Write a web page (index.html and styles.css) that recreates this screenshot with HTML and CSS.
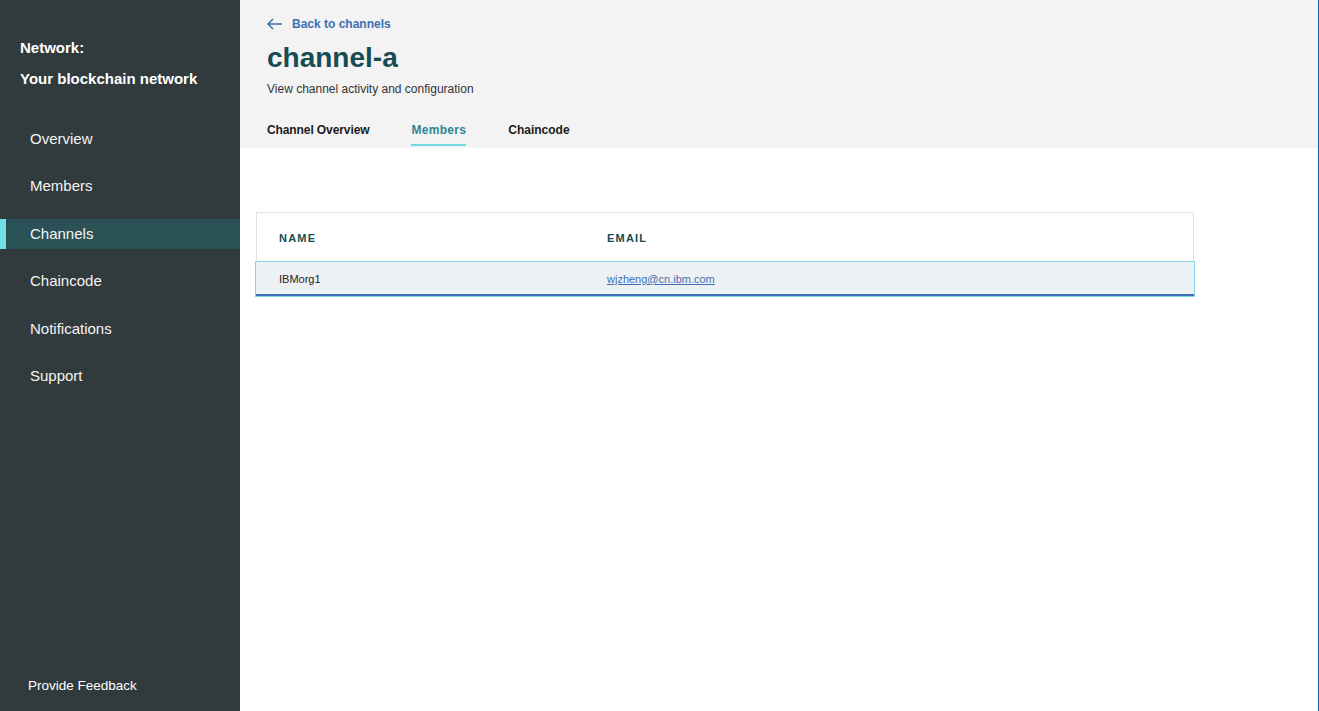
FILE: index.html
```html
<!DOCTYPE html>
<html>
<head>
<meta charset="utf-8">
<link rel="stylesheet" href="styles.css">
</head>
<body>
<div class="app">
  <aside class="sidebar">
    <div class="net">
      <div class="net-line">Network:</div>
      <div class="net-line net-name">Your blockchain network</div>
    </div>
    <nav class="nav">
      <a class="nav-item">Overview</a>
      <a class="nav-item">Members</a>
      <a class="nav-item active">Channels</a>
      <a class="nav-item">Chaincode</a>
      <a class="nav-item">Notifications</a>
      <a class="nav-item">Support</a>
    </nav>
    <div class="feedback">Provide Feedback</div>
  </aside>
  <main class="main">
    <header class="head">
      <a class="back">
        <svg class="back-icon" width="16" height="12" viewBox="0 0 16 12"><path d="M6 1 L1 6 L6 11 M1 6 H15" fill="none" stroke="#3d70b2" stroke-width="1.5"/></svg>
        <span>Back to channels</span>
      </a>
      <h1 class="title">channel-a</h1>
      <p class="desc">View channel activity and configuration</p>
      <div class="tabs">
        <span class="tab tab-first">Channel Overview</span>
        <span class="tab selected">Members</span>
        <span class="tab">Chaincode</span>
      </div>
    </header>
    <section class="content">
      <div class="table">
        <div class="row row-head">
          <div class="cell">NAME</div>
          <div class="cell">EMAIL</div>
        </div>
        <div class="row row-data">
          <div class="cell">IBMorg1</div>
          <div class="cell"><a class="mail">wjzheng@cn.ibm.com</a></div>
        </div>
      </div>
    </section>
  </main>
</div>
</body>
</html>
```

FILE: styles.css
```css
* { box-sizing: border-box; }
html, body { margin: 0; padding: 0; }
body {
  font-family: "Liberation Sans", Arial, sans-serif;
  background: #fff;
  color: #222;
}
.app {
  display: flex;
  height: 711px;
}
.sidebar {
  width: 240px;
  flex: none;
  background: #313a3d;
  color: #fff;
  display: flex;
  flex-direction: column;
}
.net {
  padding: 38px 20px 0;
}
.net-line {
  font-size: 15px;
  font-weight: bold;
  line-height: 20px;
}
.net-name { margin-top: 11px; }
.nav {
  margin-top: 35px;
  display: flex;
  flex-direction: column;
  gap: 17.4px;
}
.nav-item {
  height: 30px;
  line-height: 30px;
  padding-left: 30px;
  font-size: 15px;
  color: #f4f4f4;
}
.nav-item.active {
  background: #2a5156;
  border-left: 6px solid #71dfe8;
  padding-left: 24px;
}
.feedback {
  margin-top: auto;
  padding: 0 0 15px 28px;
  font-size: 13.5px;
  line-height: 20px;
  color: #fff;
}
.main {
  flex: 1;
  display: flex;
  flex-direction: column;
  border-right: 1px solid #1062b0;
}
.head {
  background: #f3f3f3;
  padding: 16px 27px 2px;
}
.back {
  display: flex;
  align-items: center;
  gap: 9px;
  height: 16px;
  font-size: 12px;
  font-weight: bold;
  color: #3d70b2;
}
.title {
  margin: 10px 0 0;
  font-size: 28px;
  line-height: 32px;
  font-weight: bold;
  color: #174c54;
}
.desc {
  margin: 7px 0 0;
  font-size: 12px;
  line-height: 16px;
  color: #333;
}
.tabs {
  margin-top: 25px;
  display: flex;
  gap: 42px;
}
.tab {
  font-size: 12px;
  font-weight: bold;
  line-height: 16px;
  padding-bottom: 6px;
  border-bottom: 2px solid transparent;
  color: #1c1c1c;
}
.tab-first { letter-spacing: -0.1px; }
.tab.selected {
  color: #2f8490;
  letter-spacing: 0.3px;
  border-bottom-color: #72d9e4;
}
.content {
  padding: 64px 0 0 16px;
}
.table {
  width: 938px;
  border: 1px solid #e0e0e0;
  border-bottom: none;
}
.row {
  display: grid;
  grid-template-columns: 328px 1fr;
  padding-left: 22px;
}
.row-head {
  height: 49px;
  align-items: center;
  font-size: 11px;
  font-weight: bold;
  letter-spacing: 1.2px;
  color: #174c54;
}
.row-data {
  height: 34px;
  align-items: center;
  background: #eef1f4;
  font-size: 11px;
  color: #222;
  outline: 1px solid #7fd9e7;
  box-shadow: inset 0 -2px 0 #3d70b2;
  margin: 0 -1px;
  padding-left: 23px;
}
.mail {
  color: #3d70b2;
  text-decoration: underline;
}
```
